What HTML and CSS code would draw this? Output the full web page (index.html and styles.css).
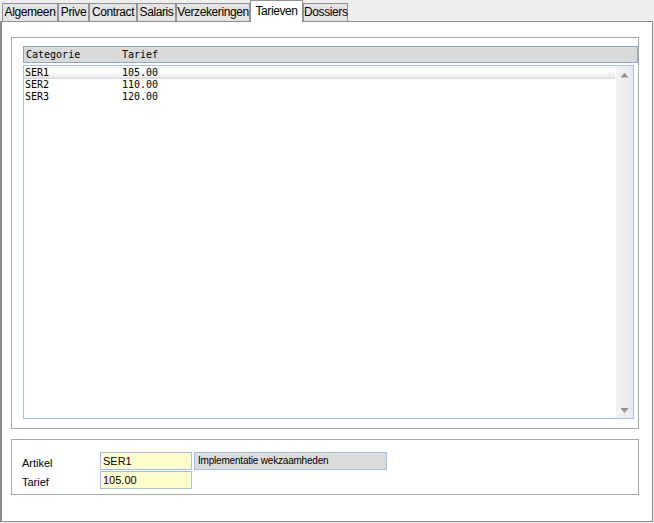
FILE: index.html
```html
<!DOCTYPE html>
<html>
<head>
<meta charset="utf-8">
<link rel="stylesheet" href="styles.css">
</head>
<body>
<div class="tabs">
  <div class="tab w-alg">Algemeen</div>
  <div class="tab w-prive">Prive</div>
  <div class="tab w-contract">Contract</div>
  <div class="tab w-salaris">Salaris</div>
  <div class="tab w-verz">Verzekeringen</div>
  <div class="tab active w-tarieven">Tarieven</div>
  <div class="tab w-dossiers">Dossiers</div>
</div>
<div class="panel">
  <div class="group list-group">
    <div class="table-head"><span class="col1">Categorie</span><span>Tarief</span></div>
    <div class="list">
      <div class="rows">
        <div class="row sel"><span class="col1">SER1</span><span>105.00</span></div>
        <div class="row"><span class="col1">SER2</span><span>110.00</span></div>
        <div class="row"><span class="col1">SER3</span><span>120.00</span></div>
      </div>
      <div class="scrollbar">
        <svg class="arrow" width="7" height="5" viewBox="0 0 7 5"><polygon points="3.5,0 7,4 0,4" fill="#8c8c8c"/><rect x="0" y="4" width="7" height="1" fill="#c8c8c8"/></svg>
        <svg class="arrow" width="7" height="5" viewBox="0 0 7 5"><rect x="0" y="0" width="7" height="1" fill="#8c8c8c"/><polygon points="0,1 7,1 3.5,5" fill="#9a9a9a"/></svg>
      </div>
    </div>
  </div>
  <div class="group form-group">
    <div class="form-row">
      <span class="label">Artikel</span>
      <div class="field">SER1</div>
      <div class="field desc">Implementatie wekzaamheden</div>
    </div>
    <div class="form-row">
      <span class="label">Tarief</span>
      <div class="field">105.00</div>
    </div>
  </div>
</div>
</body>
</html>
```
FILE: styles.css
```css
* { box-sizing: border-box; }
html, body { margin: 0; padding: 0; }
body {
  width: 654px;
  height: 523px;
  background: #eeeeee;
  font-family: "Liberation Sans", Arial, sans-serif;
  color: #000;
  overflow: hidden;
}
.tabs {
  display: flex;
  align-items: flex-end;
  height: 21px;
  padding-left: 2px;
}
.tab {
  height: 18px;
  border: 1px solid #939393;
  border-bottom: none;
  background: #e4e4e4;
  font-size: 12px;
  letter-spacing: -0.4px;
  line-height: 17px;
  text-align: center;
  white-space: nowrap;
}
.tab.active {
  height: 22px;
  margin-bottom: -1px;
  background: #fff;
  position: relative;
  z-index: 1;
  line-height: 20px;
}
.w-alg { width: 56px; }
.w-prive { width: 31px; }
.w-contract { width: 48px; }
.w-salaris { width: 39px; }
.w-verz { width: 74px; }
.w-tarieven { width: 53px; }
.w-dossiers { width: 45px; }

.panel {
  width: 653px;
  height: 501px;
  background: #fff;
  border: 1px solid #8c8c8c;
  border-left: 2px solid #8c8c8c;
  padding: 15px 0 0 9px;
  display: flex;
  flex-direction: column;
}
.group {
  width: 628px;
  border: 1px solid #a8a8a8;
}
.list-group {
  height: 392px;
  padding: 8px 0 0 11px;
  display: flex;
  flex-direction: column;
}
.table-head {
  height: 17px;
  width: 615px;
  background: #dadada;
  border: 1px solid #8fa7c4;
  font-family: "DejaVu Sans Mono", monospace;
  font-size: 10px;
  line-height: 15px;
  padding-left: 2px;
  display: flex;
}
.table-head .col1 { width: 96px; }
.list {
  margin-top: 2px;
  width: 611px;
  height: 354px;
  border: 1px solid #a2c1f0;
  display: flex;
}
.rows {
  flex: 1;
  padding-top: 1px;
  font-family: "DejaVu Sans Mono", monospace;
  font-size: 10px;
}
.row {
  height: 12px;
  line-height: 12px;
  display: flex;
  padding-left: 1px;
  margin-right: 1px;
}
.row .col1 { width: 97px; }
.row.sel {
  background: linear-gradient(#f0f0f0, #ffffff 30%, #ececec 80%, #d6d6d6);
}
.scrollbar {
  width: 17px;
  background: linear-gradient(90deg, #f2f2f2, #e9e9e9);
  display: flex;
  flex-direction: column;
  justify-content: space-between;
  align-items: center;
  padding: 7px 0 5px 0;
}
.arrow { display: block; }

.form-group {
  margin-top: 10px;
  height: 56px;
  padding: 12px 0 0 10px;
  display: flex;
  flex-direction: column;
  gap: 1px;
}
.form-row {
  display: flex;
  height: 18px;
  align-items: center;
}
.label {
  width: 78px;
  font-size: 11px;
  padding-top: 3px;
}
.field {
  width: 92px;
  height: 18px;
  background: #ffffcc;
  border: 1px solid #a2bfee;
  font-size: 11px;
  line-height: 16px;
  padding-left: 2px;
}
.field.desc {
  margin-left: 2px;
  width: 193px;
  background: #dcdcdc;
  font-size: 10px;
  letter-spacing: -0.2px;
  padding-left: 3px;
}
```
